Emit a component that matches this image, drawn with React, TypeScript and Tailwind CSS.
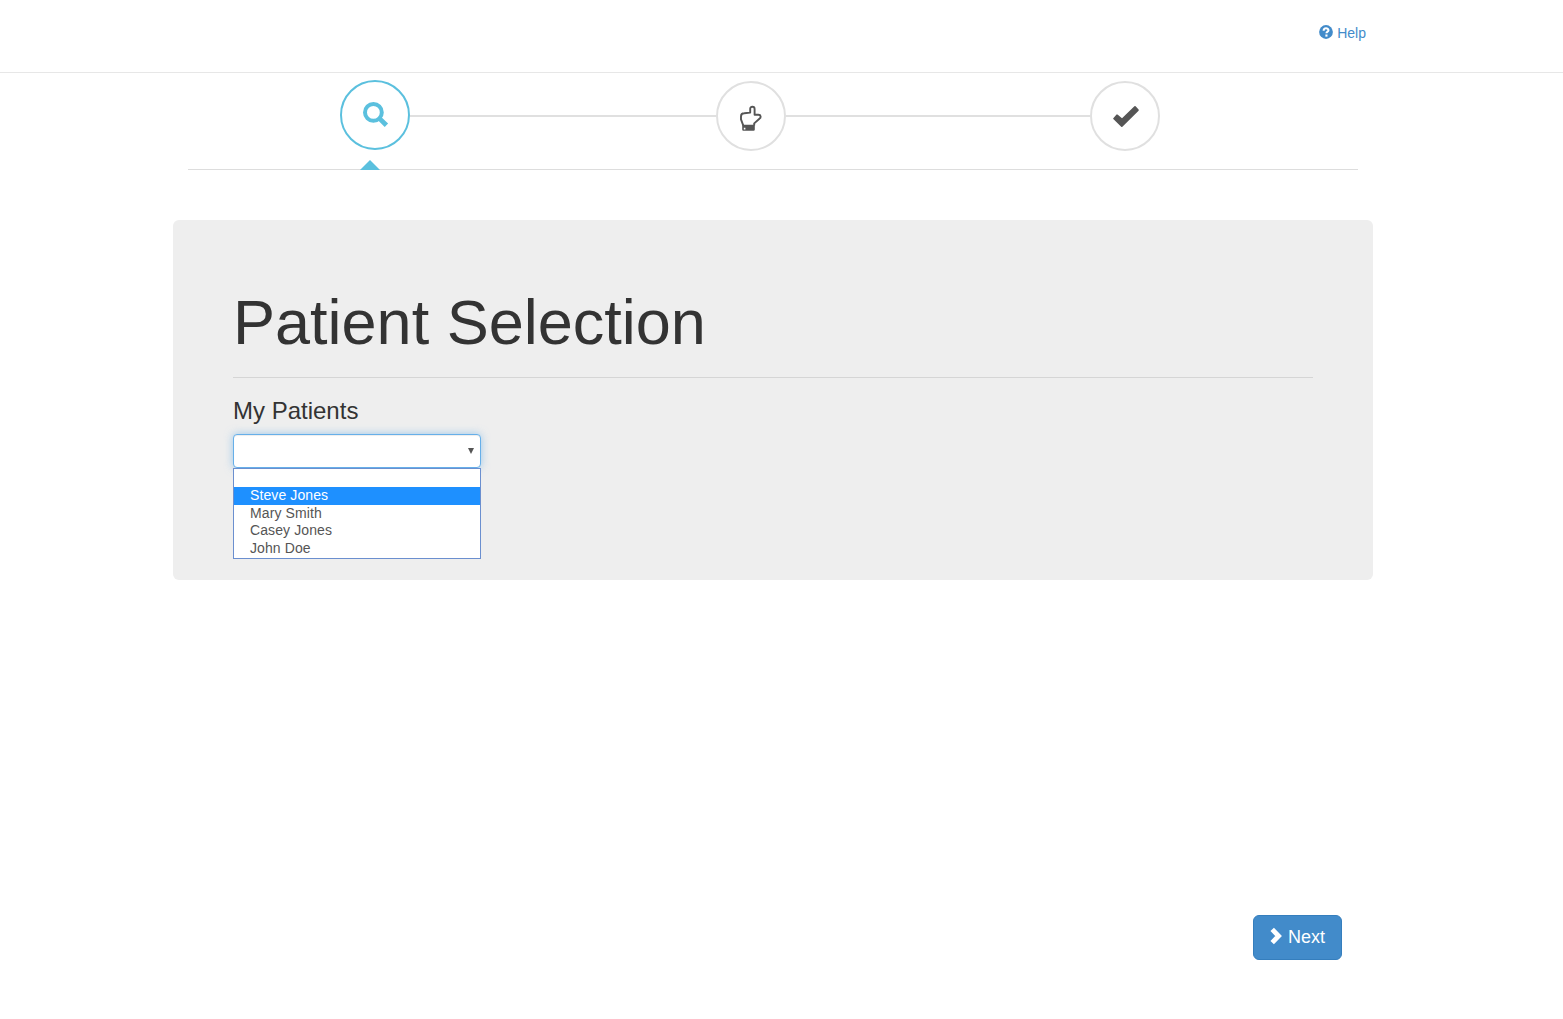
import React from "react";

const patients = ["", "Steve Jones", "Mary Smith", "Casey Jones", "John Doe"];

function SearchIcon() {
  return (
    <svg className="h-[70px] w-[70px] shrink-0" viewBox="0 0 70 70" fill="none" stroke="#5bc0de">
      <circle cx="35" cy="35" r="34" strokeWidth="2" />
      <circle cx="33.4" cy="32.4" r="8.4" strokeWidth="4" />
      <path d="M39.6 38.6L46.4 45.3" strokeWidth="4.8" />
    </svg>
  );
}

function HandIcon() {
  return (
    <svg className="mt-px h-[70px] w-[70px] shrink-0" viewBox="0 0 70 70" fill="none">
      <circle cx="35" cy="35" r="34" stroke="#e0e0e0" strokeWidth="2" />
      <path
        d="M27.2 44.3L25 38.4V35.4C25 33.4 26.2 32.2 28.2 32.2L34.2 31.6V27.8C34.2 25 38.6 25 38.6 28V33.8H42.4C45.2 33.8 45.2 36.6 43.4 37.8L38.2 42.4V44.6"
        stroke="#555"
        strokeWidth="1.9"
        strokeLinejoin="round"
      />
      <path
        fillRule="evenodd"
        d="M26.2 43.8H38.8V48.6Q38.8 49.8 37.6 49.8H27.4Q26.2 49.8 26.2 48.6ZM27.8 46.8V48.4H29.4V46.8Z"
        fill="#555"
      />
    </svg>
  );
}

function CheckIcon() {
  return (
    <svg className="mt-px h-[70px] w-[70px] shrink-0" viewBox="0 0 70 70" fill="none">
      <circle cx="35" cy="35" r="34" stroke="#e0e0e0" strokeWidth="2" />
      <path
        d="M23.3 37.2L26.5 33.6Q27 33.2 27.5 33.6L32 37.2L44.4 25.2Q45 24.7 45.6 25.2L48.6 28.6Q49 29.2 48.6 29.7L32.4 45.8Q31.8 46.3 31.2 45.8L23.3 38.1Q22.9 37.6 23.3 37.2Z"
        fill="#555"
      />
    </svg>
  );
}

export default function App() {
  return (
    <div className="h-[1019px] w-[1563px] overflow-hidden bg-white font-['Liberation_Sans',Arial,sans-serif] text-sm leading-5 text-[#333]">
      <header className="flex h-[73px] justify-end border-b border-[#e7e7e7] pt-[23px] pr-[197px]">
        <a className="flex h-5 items-center text-[#428bca]">
          <svg className="mr-1 -mt-0.5 h-3.5 w-3.5" viewBox="0 0 13 13">
            <circle cx="6.5" cy="6.5" r="6.4" fill="#428bca" />
            <path d="M4.3 5.3C4.3 2.4 8.8 2.5 8.8 4.9C8.8 6.2 6.9 6.2 6.9 7.7" fill="none" stroke="#fff" strokeWidth="1.9" />
            <path d="M5.9 8.8H7.9V10.8H5.9Z" fill="#fff" />
          </svg>
          Help
        </a>
      </header>

      <main className="ml-[173px] w-[1200px]">
        <nav className="relative mx-[15px] flex h-[97px] items-start border-b border-[#ddd] pt-[7px] pl-[152px]">
          <SearchIcon />
          <div className="mt-[35px] h-0.5 w-[306px] bg-[#e0e0e0]" />
          <HandIcon />
          <div className="mt-[35px] h-0.5 w-[304px] bg-[#e0e0e0]" />
          <CheckIcon />
          <div className="absolute -bottom-px left-[172px] border-x-[10px] border-b-[10px] border-x-transparent border-b-[#5bc0de]" />
        </nav>

        <section className="mt-[50px] h-[360px] rounded-md bg-[#eee] px-[60px] pt-[68px]">
          <h1 className="h-[89px] text-[63px] leading-[69px]">Patient Selection</h1>
          <hr className="border-t border-[#d5d5d5]" />
          <h3 className="mt-5 h-[36px] text-2xl leading-[26px]">My Patients</h3>
          <div className="relative w-[248px] text-[#555]">
            <div className="flex h-[34px] items-center justify-end rounded border border-[#66afe9] bg-white pr-[6px] shadow-[inset_0_1px_1px_rgba(0,0,0,0.075),0_0_8px_rgba(102,175,233,0.6)]">
              <svg className="h-[6px] w-[6px]" viewBox="0 0 6 6" fill="#555">
                <path d="M0 0H6L3 6Z" />
              </svg>
            </div>
            <ul className="absolute top-[34px] left-0 h-[91px] w-full border border-[#6b8fcf] bg-white tracking-[0.1px]">
              {patients.map((name) => (
                <li
                  key={name}
                  className={
                    name === "Steve Jones"
                      ? "h-[18px] bg-[#1e90ff] pl-4 leading-[17px] text-white"
                      : "h-[17.6px] pl-4 leading-[17px]"
                  }
                >
                  {name}
                </li>
              ))}
            </ul>
          </div>
        </section>

        <div className="mt-[335px] flex justify-end pr-[31px]">
          <button className="flex h-[45px] w-[89px] items-center rounded-md border border-[#357ebd] bg-[#428bca] pb-0.5 pl-4 text-lg text-white">
            <svg className="mr-1.5 -mt-0.5 h-[18px] w-3" viewBox="0 0 12 18">
              <path d="M2.2 2.4L8.6 9L2.2 15.6" fill="none" stroke="#fff" strokeWidth="4.8" />
            </svg>
            Next
          </button>
        </div>
      </main>
    </div>
  );
}
